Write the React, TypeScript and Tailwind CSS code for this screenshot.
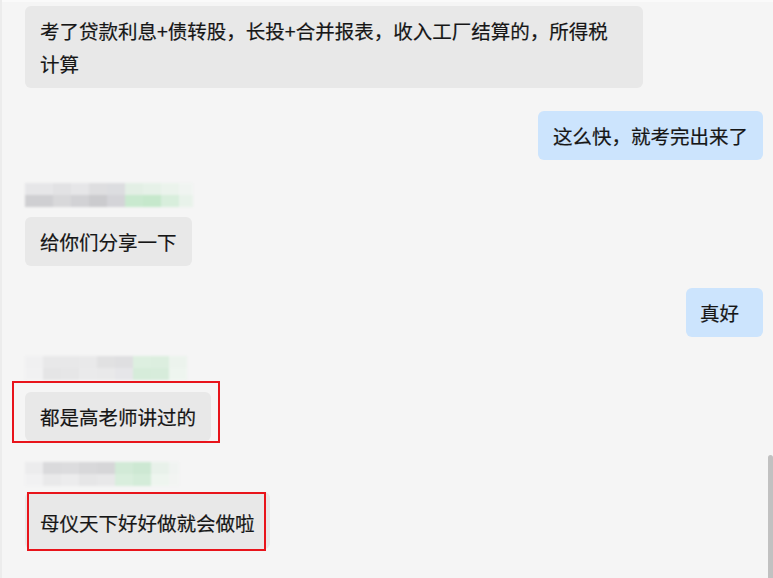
import React from 'react';

type Block = { w: number; c: string };

const nameRows: Record<string, Block[][]> = {
  a: [
    [
      { w: 28, c: '#e6e6e8' },
      { w: 18, c: '#e2e2e4' },
      { w: 18, c: '#e6e6e8' },
      { w: 18, c: '#dedee0' },
      { w: 18, c: '#dcdde0' },
      { w: 18, c: '#e3efe5' },
      { w: 18, c: '#e6f1e8' },
      { w: 18, c: '#ebf3ec' },
      { w: 14, c: '#f0f4f1' },
    ],
    [
      { w: 28, c: '#cfcfd2' },
      { w: 18, c: '#d8d8da' },
      { w: 18, c: '#d2d2d5' },
      { w: 18, c: '#cbcbce' },
      { w: 18, c: '#d4d4d8' },
      { w: 18, c: '#c9e9cf' },
      { w: 18, c: '#c6e8cc' },
      { w: 18, c: '#d8eedc' },
      { w: 14, c: '#e8f2ea' },
    ],
  ],
  b: [
    [
      { w: 18, c: '#f0f0f1' },
      { w: 18, c: '#e8e8e9' },
      { w: 18, c: '#e8e8e9' },
      { w: 18, c: '#e9e9ea' },
      { w: 18, c: '#e1e1e2' },
      { w: 18, c: '#dfdfe1' },
      { w: 18, c: '#ddefe0' },
      { w: 18, c: '#dceedf' },
      { w: 18, c: '#ecf3ed' },
    ],
    [
      { w: 18, c: '#f1f1f2' },
      { w: 18, c: '#e5e5e6' },
      { w: 18, c: '#e6e6e7' },
      { w: 18, c: '#eaeaeb' },
      { w: 18, c: '#e9e9ea' },
      { w: 18, c: '#e6e6e9' },
      { w: 18, c: '#d6ecda' },
      { w: 18, c: '#d7ecdb' },
      { w: 18, c: '#eef5ef' },
    ],
  ],
  c: [
    [
      { w: 18, c: '#ececed' },
      { w: 18, c: '#dadadc' },
      { w: 18, c: '#dcdcde' },
      { w: 18, c: '#d8d8da' },
      { w: 18, c: '#d6d6d8' },
      { w: 18, c: '#d2ead7' },
      { w: 18, c: '#cde8d3' },
      { w: 18, c: '#e8f1ea' },
      { w: 10, c: '#f0f3f1' },
    ],
    [
      { w: 18, c: '#f1f1f2' },
      { w: 18, c: '#e9e9ea' },
      { w: 18, c: '#ececed' },
      { w: 18, c: '#e6e6e7' },
      { w: 18, c: '#e8e8e9' },
      { w: 18, c: '#d9eedd' },
      { w: 18, c: '#d4ecd9' },
      { w: 18, c: '#eef5ef' },
      { w: 10, c: '#f2f4f2' },
    ],
  ],
};

const BlurredName: React.FC<{ rows: Block[][]; className?: string }> = ({ rows, className }) => (
  <div className={`flex flex-col blur-[1px] ${className ?? ''}`}>
    {rows.map((row, i) => (
      <div key={i} className="flex h-[12px]">
        {row.map((b, j) => (
          <div key={j} style={{ width: b.w, backgroundColor: b.c }} />
        ))}
      </div>
    ))}
  </div>
);

const Bubble: React.FC<{ children: React.ReactNode; mine?: boolean; className?: string }> = ({
  children,
  mine,
  className,
}) => (
  <div
    className={`rounded-[6px] px-[15px] py-2 text-[19.5px] leading-[33px] text-[#161616] [-webkit-text-stroke:0.2px_#161616] ${
      mine ? 'bg-[#cce4fd]' : 'bg-[#e8e8e8]'
    } ${className ?? ''}`}
  >
    {children}
  </div>
);

export default function App() {
  return (
    <div
      className="relative w-[773px] h-[578px] overflow-hidden bg-[#f5f5f5] border-l-2 border-[#ececec]"
      style={{ fontFamily: '"Noto Sans CJK SC", "Noto Sans", sans-serif' }}
    >
      <div className="h-[2px] bg-[#fafafa]" />
      <div className="flex flex-col pl-[23px] pr-[10px] pt-[4px]">
        <div className="self-start">
          <Bubble className="w-[618px]">
            考了贷款利息+债转股，长投+合并报表，收入工厂结算的，所得税
            <br />
            计算
          </Bubble>
        </div>

        <div className="self-end mt-[23px]">
          <Bubble mine>这么快，就考完出来了</Bubble>
        </div>

        <BlurredName rows={nameRows.a} className="mt-[23px] self-start" />

        <div className="self-start mt-[10px]">
          <Bubble>给你们分享一下</Bubble>
        </div>

        <div className="self-end mt-[22px]">
          <Bubble mine className="w-[77px] !pl-[14px]">
            真好
          </Bubble>
        </div>

        <BlurredName rows={nameRows.b} className="mt-[19px] self-start" />

        <div className="self-start mt-[12px] relative">
          <Bubble>都是高老师讲过的</Bubble>
          <div className="absolute -left-[13px] -right-[9px] -top-[11px] -bottom-[2px] border-2 border-[#e8141b]" />
        </div>

        <BlurredName rows={nameRows.c} className="mt-[21px] self-start" />

        <div className="self-start mt-[6px] relative">
          <Bubble className="pt-[14px] pb-[10px]">母仪天下好好做就会做啦</Bubble>
          <div className="absolute left-[2px] right-[4px] top-0 -bottom-[2px] border-2 border-[#e8141b]" />
        </div>
      </div>

      <div className="absolute right-0 top-[455px] bottom-0 w-[5px] rounded-t-[3px] bg-[#c1c1c1]" />
    </div>
  );
}
